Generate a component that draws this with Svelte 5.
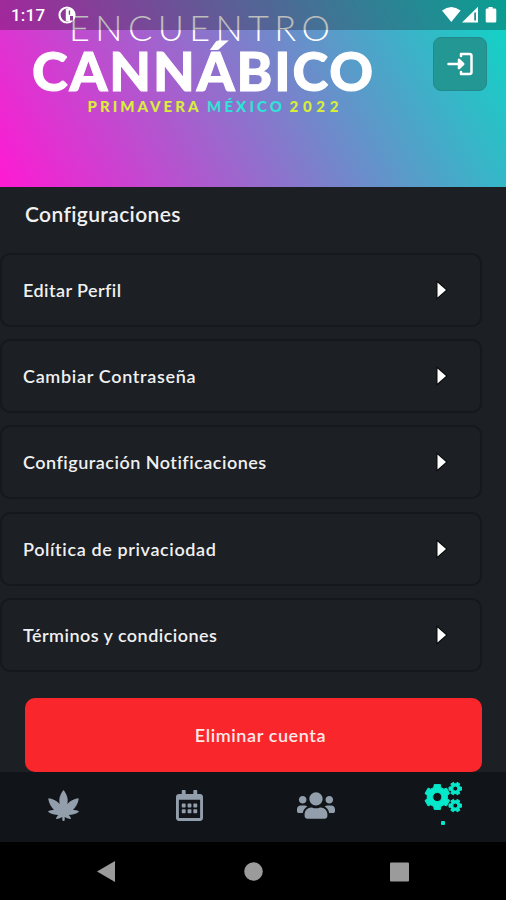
<script>
  const rows = [
    { label: 'Editar Perfil', spacing: 0.43 },
    { label: 'Cambiar Contraseña', spacing: 0.68 },
    { label: 'Configuración Notificaciones', spacing: 0.49 },
    { label: 'Política de privaciodad', spacing: 0.62 },
    { label: 'Términos y condiciones', spacing: 0.46 }
  ];

  const tabs = [
    {
      name: 'strains',
      width: 31,
      box: '0 0 31 31',
      path: 'M15.500 0C17.500 2.500 19.500 6 19.700 9.500L19.500 14C22 11 26 8.800 30 8.300Q31 8.300 30.600 9.500C30 13.500 27.500 17.500 25 20Q27.500 19.700 30.500 21Q31.300 21.600 30.300 22.300C27.500 24 24 25 20.800 25Q22.500 26.500 23 28.500Q22.800 29.200 22 29Q19 28.500 16.700 27V30Q16.700 31 15.500 31Q14.300 31 14.300 30V27Q12 28.500 9 29Q8.200 29.200 8 28.500Q8.500 26.500 10.200 25C7 25 3.500 24 .7 22.300Q-.3 21.600 .5 21Q3.500 19.700 6 20C3.500 17.500 1 13.500 .4 9.500Q0 8.300 1 8.300C5 8.800 9 11 11.500 14L11.300 9.500C11.500 6 13.500 2.500 15.500 0Z'
    },
    {
      name: 'calendar',
      width: 27,
      box: '0 0 448 512',
      path: 'M148 288h-40c-6.600 0-12-5.400-12-12v-40c0-6.600 5.400-12 12-12h40c6.600 0 12 5.400 12 12v40c0 6.600-5.400 12-12 12zm108-12v-40c0-6.600-5.400-12-12-12h-40c-6.600 0-12 5.400-12 12v40c0 6.600 5.400 12 12 12h40c6.600 0 12-5.400 12-12zm96 0v-40c0-6.600-5.400-12-12-12h-40c-6.600 0-12 5.400-12 12v40c0 6.600 5.400 12 12 12h40c6.600 0 12-5.400 12-12zm-96 96v-40c0-6.600-5.400-12-12-12h-40c-6.600 0-12 5.400-12 12v40c0 6.600 5.400 12 12 12h40c6.600 0 12-5.400 12-12zm-96 0v-40c0-6.600-5.400-12-12-12h-40c-6.600 0-12 5.400-12 12v40c0 6.600 5.400 12 12 12h40c6.600 0 12-5.400 12-12zm192 0v-40c0-6.600-5.400-12-12-12h-40c-6.600 0-12 5.400-12 12v40c0 6.600 5.400 12 12 12h40c6.600 0 12-5.400 12-12zm96-260v352c0 26.500-21.500 48-48 48H48c-26.500 0-48-21.500-48-48V112c0-26.500 21.500-48 48-48h48V12c0-6.600 5.400-12 12-12h40c6.600 0 12 5.400 12 12v52h128V12c0-6.600 5.400-12 12-12h40c6.600 0 12 5.400 12 12v52h48c26.500 0 48 21.500 48 48zm-48 346V160H48v298c0 3.300 2.700 6 6 6h340c3.300 0 6-2.700 6-6z'
    },
    {
      name: 'people',
      width: 38,
      box: '0 0 640 512',
      path: 'M96 224c35.300 0 64-28.700 64-64s-28.700-64-64-64-64 28.700-64 64 28.700 64 64 64zm448 0c35.300 0 64-28.700 64-64s-28.700-64-64-64-64 28.700-64 64 28.700 64 64 64zm32 32h-64c-17.600 0-33.500 7.100-45.100 18.600 40.300 22.100 68.900 62 75.100 109.400h66c17.700 0 32-14.300 32-32v-32c0-35.300-28.700-64-64-64zm-256 0c61.900 0 112-50.100 112-112S381.900 32 320 32 208 82.100 208 144s50.100 112 112 112zm76.800 32h-8.300c-20.800 10-43.900 16-68.500 16s-47.600-6-68.500-16h-8.300C179.600 288 128 339.600 128 403.200V432c0 26.500 21.500 48 48 48h288c26.500 0 48-21.500 48-48v-28.800c0-63.600-51.600-115.200-115.200-115.200zm-223.700-13.400C161.500 263.100 145.600 256 128 256H64c-35.300 0-64 28.700-64 64v32c0 17.700 14.300 32 32 32h65.900c6.300-47.400 34.900-87.300 75.200-109.400z'
    }
  ];

  // six toothed wheel with a round hole, start is the angle of the first tooth
  function gear(cx, cy, outer, inner, hole, start) {
    const points = [];
    for (let i = 0; i < 6; i++) {
      const a = start + i * 60;
      for (const [offset, r] of [[-20, inner], [-14, outer], [14, outer], [20, inner]]) {
        const t = ((a + offset) * Math.PI) / 180;
        points.push((cx + r * Math.cos(t)).toFixed(2) + ' ' + (cy + r * Math.sin(t)).toFixed(2));
      }
    }
    return `M${points.join('L')}ZM${cx - hole} ${cy}a${hole} ${hole} 0 1 0 ${hole * 2} 0a${hole} ${hole} 0 1 0 ${-hole * 2} 0Z`;
  }

  const gears = [
    gear(13.3, 16, 12.8, 10.2, 4.6, 30),
    gear(31.3, 7.6, 6.5, 4.9, 2.5, 0),
    gear(31.3, 24.6, 6.5, 4.9, 2.5, 0)
  ];
</script>

<div class="screen">
  <header>
    <svg class="logo" width="400" height="125" viewBox="0 0 400 125">
      <text x="69" y="41" class="thin" textLength="261">ENCUENTRO</text>
      <text x="32" y="91" class="heavy" textLength="341">CANNÁBICO</text>
      <text x="87.500" y="112" class="small lime" textLength="111">PRIMAVERA</text>
      <text x="207" y="112" class="small aqua" textLength="75">MÉXICO</text>
      <text x="289.500" y="112" class="small lime" textLength="49">2022</text>
    </svg>
    <button class="logout" aria-label="Salir">
      <svg width="26" height="24" viewBox="0 0 26 24" fill="none" stroke="#fff" stroke-width="2.500" stroke-linecap="round" stroke-linejoin="round">
        <path d="M1.500 12H16M12 7.800 16.200 12 12 16.200zM14 4V2H22.500q2 0 2 2v16q0 2-2 2H14V20" />
      </svg>
    </button>
    <div class="status">
      <span class="time">1:17</span>
      <svg width="18" height="18" viewBox="0 0 18 18">
        <circle cx="9" cy="9" r="7.500" fill="none" stroke="#fff" stroke-width="2.200" />
        <path d="M7.800 3v12H12l4-3.500V6L12 2z" fill="#fff" />
        <path d="M10.800 4.500h1.300v4.200h-1.300zM12 10h3v4.500h-3z" fill="#8b3d91" />
      </svg>
      <svg class="signals" width="56" height="18" viewBox="0 0 56 18" fill="#fff">
        <path d="M0 4.500Q9.300-2.500 18.600 4.500L9.300 16z" />
        <path d="M20 16.500 36 .800v15.700z" />
        <path d="M32.300 6.500h1.600v8h-1.600z" fill="#167d7b" />
        <path d="M46.500 1h4.200v1.600h2.300q1.300 0 1.300 1.300v11.300q0 1.300-1.300 1.300h-8q-1.300 0-1.300-1.300V3.900q0-1.300 1.300-1.300h1.500z" />
      </svg>
    </div>
  </header>

  <main>
    <h1>Configuraciones</h1>
    <ul>
      {#each rows as row}
        <li>
          <span style="letter-spacing: {row.spacing}px">{row.label}</span>
          <svg width="12" height="20" viewBox="0 0 12 20">
            <path d="M1.500 2.500v15L10 10z" fill="#fff" stroke="#070809" stroke-width="2" paint-order="stroke" />
          </svg>
        </li>
      {/each}
    </ul>
    <button class="delete">Eliminar cuenta</button>
  </main>

  <nav>
    {#each tabs as tab}
      <a href="#{tab.name}" aria-label={tab.name}>
        <svg width={tab.width} height="31" viewBox={tab.box}><path d={tab.path} fill="currentColor" /></svg>
      </a>
    {/each}
    <a href="#settings" class="active" aria-label="settings">
      <svg width="38" height="32" viewBox="0 0 38 32">
        {#each gears as d}
          <path {d} fill="currentColor" stroke="currentColor" stroke-width="1" stroke-linejoin="round" fill-rule="evenodd" />
        {/each}
      </svg>
      <i></i>
    </a>
  </nav>

  <div class="system">
    <svg width="506" height="59" viewBox="0 0 506 59" fill="#9b9b9b">
      <path d="M97 29.500 115 19v21z" />
      <circle cx="253.500" cy="29.500" r="9.300" />
      <rect x="390" y="20.500" width="19" height="19" rx="1" />
    </svg>
  </div>
</div>

<style>
  :global(body) {
    background: #000;
  }

  .screen {
    width: 506px;
    height: 900px;
    display: flex;
    flex-direction: column;
    overflow: hidden;
    background: #1c1f23;
    color: #f0f0f1;
    font-family: Lato, "Noto Sans", sans-serif;
  }

  header {
    position: relative;
    height: 186.5px;
    flex: none;
    display: flex;
    justify-content: space-between;
    background: linear-gradient(62deg, #ff1ad3, #0cd7c5);
  }

  .logo text {
    fill: #fff;
  }

  .logo .thin {
    font-size: 36px;
    font-weight: 300;
  }

  .logo .heavy {
    font-size: 54px;
    font-weight: 900;
    stroke: #fff;
    stroke-width: 1px;
  }

  .logo .small {
    font-size: 15px;
    font-weight: 900;
  }

  .logo .lime {
    fill: #d9ee3a;
  }

  .logo .aqua {
    fill: #2fe3d6;
  }

  .logout {
    width: 54px;
    height: 54px;
    margin: 37px 19px 0 0;
    padding: 0;
    display: flex;
    align-items: center;
    justify-content: center;
    border: 1px solid #23898b;
    border-radius: 8px;
    background: #239794;
  }

  /* system bar lies over the header art */
  .status {
    position: absolute;
    inset: 0 0 auto 0;
    height: 30px;
    padding: 0 8px 0 11px;
    box-sizing: border-box;
    display: flex;
    align-items: center;
    gap: 14px;
    background: rgba(0, 0, 0, 0.26);
  }

  .time {
    width: 33px;
    color: #fff;
    font: 500 17px Roboto, sans-serif;
    letter-spacing: 0.2px;
  }

  .signals {
    margin-left: auto;
  }

  main {
    height: 585.5px;
    flex: none;
  }

  h1 {
    margin: 0;
    padding: 13px 25px 0;
    height: 53.500px;
    font-size: 21px;
    line-height: 28px;
    font-weight: 600;
    letter-spacing: 0.36px;
  }

  ul {
    margin: 0;
    padding: 0;
    list-style: none;
    display: flex;
    flex-direction: column;
    gap: 12.2px;
  }

  li {
    width: 482px;
    height: 74px;
    padding: 0 32px 0 21px;
    box-sizing: border-box;
    display: flex;
    align-items: center;
    justify-content: space-between;
    border: 2px solid #15181c;
    border-radius: 10px;
    font-size: 18px;
    font-weight: 600;
  }

  .delete {
    display: block;
    width: 457px;
    height: 74.500px;
    margin: 26px 0 0 25px;
    padding: 0 0 0 14px;
    position: relative;
    z-index: 1;
    border: 0;
    border-radius: 10px;
    background: #f9262b;
    color: #ffe9e9;
    font: 600 18px Lato, sans-serif;
    letter-spacing: 0.6px;
  }

  nav {
    height: 69.500px;
    flex: none;
    display: grid;
    grid-template-columns: repeat(4, 1fr);
    background: #111519;
  }

  nav a {
    display: flex;
    flex-direction: column;
    align-items: center;
    padding-top: 18px;
    color: #929eab;
  }

  nav .active {
    padding-top: 9px;
    gap: 8px;
    color: #05e8c9;
  }

  nav i {
    width: 4px;
    height: 4px;
    border-radius: 1px;
    background: currentColor;
  }

  .system {
    flex: 1;
    background: #000;
  }
</style>
